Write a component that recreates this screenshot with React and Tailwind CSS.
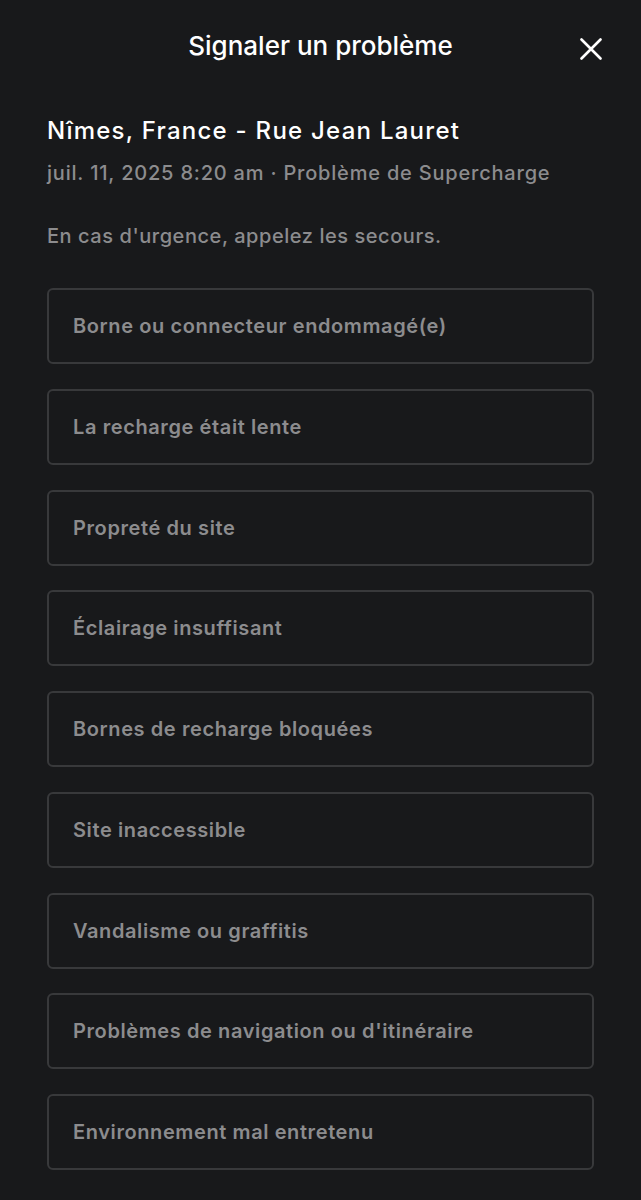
export default function App() {
  const options = [
    "Borne ou connecteur endommagé(e)",
    "La recharge était lente",
    "Propreté du site",
    "Éclairage insuffisant",
    "Bornes de recharge bloquées",
    "Site inaccessible",
    "Vandalisme ou graffitis",
    "Problèmes de navigation ou d'itinéraire",
    "Environnement mal entretenu",
  ];

  return (
    <div
      className="min-h-[1200px] w-full bg-[#18191b] text-white"
      style={{ fontFamily: "Inter, 'Noto Sans', sans-serif" }}
    >
      {/* Header */}
      <div className="relative flex h-[91px] items-center justify-center">
        <h1 className="text-[26px] font-medium text-white">Signaler un problème</h1>
        <button className="absolute right-[39px] top-[38px] flex h-[22px] w-[22px] items-center justify-center">
          <svg width="22" height="22" viewBox="0 0 22 22" fill="none">
            <path d="M1.5 1.5L20.5 20.5M20.5 1.5L1.5 20.5" stroke="#ffffff" strokeWidth="2.6" strokeLinecap="round" />
          </svg>
        </button>
      </div>

      <div className="px-[47px] pt-[25px]">
        <h2 className="text-[24px] font-medium leading-[30px] tracking-[1.25px] text-white">
          Nîmes, France - Rue Jean Lauret
        </h2>
        <p className="mt-[12px] text-[20px] font-medium tracking-[0.8px] text-[#8c8c8e]">
          juil. 11, 2025 8:20 am · Problème de Supercharge
        </p>
        <p className="mt-[33px] text-[20px] font-medium tracking-[0.55px] text-[#8c8c8e]">
          En cas d'urgence, appelez les secours.
        </p>

        <div className="mt-[37px] flex flex-col gap-[24.75px]">
          {options.map((o) => (
            <div
              key={o}
              className="flex h-[76px] items-center rounded-[6px] border-2 border-[#38393b] px-[24px]"
            >
              <span className="text-[20px] font-semibold tracking-[0.6px] text-[#8c8c8e]">{o}</span>
            </div>
          ))}
        </div>
      </div>
    </div>
  );
}
